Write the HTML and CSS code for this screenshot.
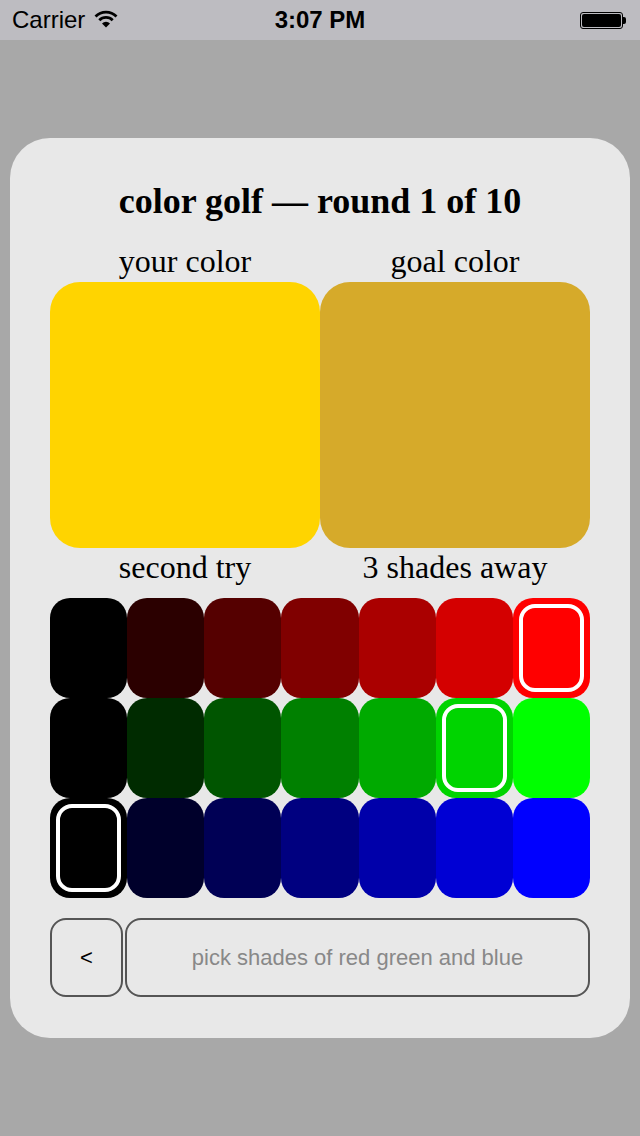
FILE: index.html
```html
<!DOCTYPE html>
<html>
<head>
<meta charset="utf-8">
<link rel="stylesheet" href="styles.css">
</head>
<body>
<div class="status">
  <div class="carrier">Carrier
    <svg class="wifi" width="24" height="18" viewBox="0 0 24 18">
      <path d="M1.5 6.5 A15 15 0 0 1 22.5 6.5" fill="none" stroke="#000" stroke-width="2.8"/>
      <path d="M5.3 10.2 A9.5 9.5 0 0 1 18.7 10.2" fill="none" stroke="#000" stroke-width="2.8"/>
      <path d="M12 17.5 L8 13.4 A5.8 5.8 0 0 1 16 13.4 Z" fill="#000"/>
    </svg>
  </div>
  <div class="time">3:07 PM</div>
  <div class="battery"><div class="batt-body"><div class="batt-fill"></div></div><div class="batt-nub"></div></div>
</div>
<div class="screen">
  <div class="card">
    <h1 class="title">color golf — round 1 of 10</h1>
    <div class="pair labels">
      <div>your color</div>
      <div>goal color</div>
    </div>
    <div class="pair swatches">
      <div class="swatch" style="background:#ffd400"></div>
      <div class="swatch" style="background:#d6aa2a"></div>
    </div>
    <div class="pair labels status-labels">
      <div>second try</div>
      <div>3 shades away</div>
    </div>
    <div class="grid">
      <div class="cell" style="background:#000000"></div>
      <div class="cell" style="background:#2b0000"></div>
      <div class="cell" style="background:#550000"></div>
      <div class="cell" style="background:#800000"></div>
      <div class="cell" style="background:#aa0000"></div>
      <div class="cell" style="background:#d40000"></div>
      <div class="cell sel" style="background:#ff0000"></div>
      <div class="cell" style="background:#000000"></div>
      <div class="cell" style="background:#002b00"></div>
      <div class="cell" style="background:#005500"></div>
      <div class="cell" style="background:#008000"></div>
      <div class="cell" style="background:#00aa00"></div>
      <div class="cell sel" style="background:#00d400"></div>
      <div class="cell" style="background:#00ff00"></div>
      <div class="cell sel" style="background:#000000"></div>
      <div class="cell" style="background:#00002b"></div>
      <div class="cell" style="background:#000055"></div>
      <div class="cell" style="background:#000080"></div>
      <div class="cell" style="background:#0000aa"></div>
      <div class="cell" style="background:#0000d4"></div>
      <div class="cell" style="background:#0000ff"></div>
    </div>
    <div class="buttons">
      <div class="btn back">&lt;</div>
      <div class="btn hint">pick shades of red green and blue</div>
    </div>
  </div>
</div>
</body>
</html>
```
FILE: styles.css
```css
html, body {
  margin: 0;
  padding: 0;
}
body {
  width: 640px;
  height: 1136px;
  background: #a8a8a8;
  overflow: hidden;
}
.status {
  height: 40px;
  background: #bdbcc1;
  display: flex;
  align-items: center;
  justify-content: space-between;
  padding: 0 14px 0 12px;
  box-sizing: border-box;
  position: relative;
  font-family: "Liberation Sans", Arial, sans-serif;
  font-size: 24px;
  color: #000;
}
.carrier {
  display: flex;
  align-items: center;
  gap: 9px;
}
.wifi {
  margin-top: -2px;
}
.time {
  position: absolute;
  left: 0;
  right: 0;
  text-align: center;
  font-weight: bold;
  pointer-events: none;
}
.battery {
  display: flex;
  align-items: center;
}
.batt-body {
  width: 43px;
  height: 17px;
  border: 1px solid #000;
  border-radius: 3px;
  padding: 1px;
  box-sizing: border-box;
}
.batt-fill {
  width: 100%;
  height: 100%;
  background: #000;
  border-radius: 2px;
}
.batt-nub {
  width: 3px;
  height: 7px;
  background: #000;
  border-radius: 0 2px 2px 0;
}
.screen {
  padding: 98px 10px 0 10px;
}
.card {
  background: #e8e8e8;
  border-radius: 40px;
  padding: 42px 40px 41px 40px;
  font-family: "Liberation Serif", "Times New Roman", serif;
  color: #000;
}
.title {
  margin: 0;
  font-size: 36px;
  line-height: 42px;
  font-weight: bold;
  text-align: center;
}
.pair {
  display: grid;
  grid-template-columns: 1fr 1fr;
}
.labels {
  margin-top: 22px;
  font-size: 32px;
  line-height: 34px;
  text-align: center;
}
.swatches {
  margin-top: 4px;
  height: 266px;
}
.swatch {
  border-radius: 30px;
}
.status-labels {
  margin-top: 2px;
}
.grid {
  margin-top: 14px;
  display: grid;
  grid-template-columns: repeat(7, 1fr);
  grid-auto-rows: 100px;
}
.cell {
  border-radius: 20px;
  position: relative;
}
.cell.sel::after {
  content: "";
  position: absolute;
  left: 6px;
  right: 6px;
  top: 6px;
  bottom: 6px;
  border: 4px solid #fff;
  border-radius: 16px;
}
.buttons {
  margin-top: 20px;
  display: flex;
  gap: 2px;
  height: 79px;
}
.btn {
  border: 2px solid #555;
  border-radius: 16px;
  box-sizing: border-box;
  display: flex;
  align-items: center;
  justify-content: center;
  font-family: "Liberation Sans", Arial, sans-serif;
}
.back {
  width: 73px;
  font-size: 22px;
  color: #000;
}
.hint {
  flex: 1;
  font-size: 22px;
  color: #888;
}
```
